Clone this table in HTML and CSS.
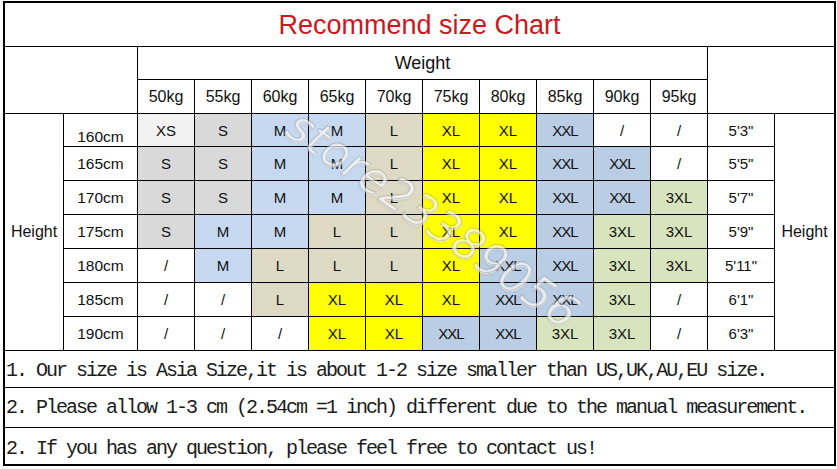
FILE: index.html
```html
<!DOCTYPE html>
<html lang="en">
<head>
<meta charset="utf-8">
<title>Recommend size Chart</title>
<link rel="stylesheet" href="styles.css">
</head>
<body>
<div class="chart">
  <div class="title">Recommend size Chart</div>
  <div class="corner-l"></div>
  <div class="weight">Weight</div>
  <div class="corner-r"></div>
  <div class="kg">50kg</div><div class="kg">55kg</div><div class="kg">60kg</div><div class="kg">65kg</div><div class="kg">70kg</div><div class="kg">75kg</div><div class="kg">80kg</div><div class="kg">85kg</div><div class="kg">90kg</div><div class="kg">95kg</div>
  <div class="hlabel left">Height</div>
  <div class="hlabel right">Height</div>

  <div class="cm first">160cm</div><div class="xs">XS</div><div class="s">S</div><div class="m">M</div><div class="m">M</div><div class="l">L</div><div class="xl">XL</div><div class="xl">XL</div><div class="xxl">XXL</div><div class="na">/</div><div class="na">/</div><div class="ft">5'3"</div>
  <div class="cm">165cm</div><div class="s">S</div><div class="s">S</div><div class="m">M</div><div class="m">M</div><div class="l">L</div><div class="xl">XL</div><div class="xl">XL</div><div class="xxl">XXL</div><div class="xxl">XXL</div><div class="na">/</div><div class="ft">5'5"</div>
  <div class="cm">170cm</div><div class="s">S</div><div class="s">S</div><div class="m">M</div><div class="m">M</div><div class="l">L</div><div class="xl">XL</div><div class="xl">XL</div><div class="xxl">XXL</div><div class="xxl">XXL</div><div class="x3">3XL</div><div class="ft">5'7"</div>
  <div class="cm">175cm</div><div class="s">S</div><div class="m">M</div><div class="m">M</div><div class="l">L</div><div class="l">L</div><div class="xl">XL</div><div class="xl">XL</div><div class="xxl">XXL</div><div class="x3">3XL</div><div class="x3">3XL</div><div class="ft">5'9"</div>
  <div class="cm">180cm</div><div class="na">/</div><div class="m">M</div><div class="l">L</div><div class="l">L</div><div class="l">L</div><div class="xl">XL</div><div class="xxl">XXL</div><div class="xxl">XXL</div><div class="x3">3XL</div><div class="x3">3XL</div><div class="ft">5'11"</div>
  <div class="cm">185cm</div><div class="na">/</div><div class="na">/</div><div class="l">L</div><div class="xl">XL</div><div class="xl">XL</div><div class="xl">XL</div><div class="xxl">XXL</div><div class="xxl">XXL</div><div class="x3">3XL</div><div class="na">/</div><div class="ft">6'1"</div>
  <div class="cm">190cm</div><div class="na">/</div><div class="na">/</div><div class="na">/</div><div class="xl">XL</div><div class="xl">XL</div><div class="xxl">XXL</div><div class="xxl">XXL</div><div class="x3">3XL</div><div class="x3">3XL</div><div class="na">/</div><div class="ft">6'3"</div>

  <div class="note n1">1. Our size is Asia Size,it is about 1-2 size smaller than US,UK,AU,EU size.</div>
  <div class="note n2">2. Please allow 1-3 cm (2.54cm =1 inch) different due to the manual measurement.</div>
  <div class="note n3">2. If you has any question, please feel free to contact us!</div>

  <div class="watermark">store23389056</div>
</div>
</body>
</html>
```

FILE: styles.css
```css
html, body {
  margin: 0;
  padding: 0;
  background: #ffffff;
}

.chart {
  position: relative;
  overflow: hidden;
  display: grid;
  grid-template-columns: 58px 73px repeat(10, 56px) 66px 59px;
  grid-template-rows: 43px 32px 33px 32px repeat(6, 33px) 36px 39px 36px;
  gap: 1px;
  padding: 2px;
  width: max-content;
  margin: 1px 0 0 3px;
  background: #000;
  font-family: "Liberation Sans", Arial, sans-serif;
  font-size: 15px;
  color: #111;
}

.chart > div {
  background: #fff;
  display: flex;
  align-items: center;
  justify-content: center;
  white-space: nowrap;
}

.title {
  grid-column: 1 / -1;
  font-size: 27px;
  color: #c8191e;
}

.chart > .title {
  padding-top: 2px;
}

.corner-l {
  grid-column: 1 / 3;
  grid-row: 2 / 4;
}

.weight {
  grid-column: 3 / 13;
  grid-row: 2;
  font-size: 18px;
}

.corner-r {
  grid-column: 13 / 15;
  grid-row: 2 / 4;
}

.kg {
  font-size: 16px;
}

.hlabel {
  font-size: 16px;
  grid-row: 4 / 11;
}

.hlabel.left {
  grid-column: 1;
}

.hlabel.right {
  grid-column: 14;
}

.cm {
  font-size: 15.5px;
}

.chart > .cm.first {
  align-items: flex-end;
}

.ft {
  font-size: 15px;
}

.chart > .xs { background: #f2f2f2; }
.chart > .s { background: #d9d9d9; }
.chart > .m { background: #c6d9f1; }
.chart > .l { background: #ddd9c4; }
.chart > .xl { background: #ffff00; }
.chart > .xxl { background: #b9cde5; }
.chart > .x3 { background: #d7e4bd; }
.chart > .na { background: #ffffff; }

.xxl {
  letter-spacing: -1px;
}

.chart > .note {
  grid-column: 1 / -1;
  justify-content: flex-start;
  padding-left: 1px;
  font-family: "Liberation Mono", "Courier New", monospace;
  font-size: 20px;
  letter-spacing: -2px;
  color: #1c1c1c;
}

.chart > .n1 { padding-top: 3px; }
.chart > .n3 { padding-top: 4px; }

.chart > .watermark {
  position: absolute;
  left: 430px;
  top: 218px;
  transform: translate(-50%, -50%) rotate(35deg);
  background: transparent;
  font-family: "DejaVu Sans", sans-serif;
  font-style: italic;
  font-size: 45px;
  color: rgba(255, 255, 255, 0.3);
  -webkit-text-stroke: 0.8px rgba(120, 120, 120, 0.4);
  text-shadow: 1px 1px 1px rgba(255, 255, 255, 0.6), 1px 2px 2px rgba(110, 110, 110, 0.18);
  pointer-events: none;
}
```
